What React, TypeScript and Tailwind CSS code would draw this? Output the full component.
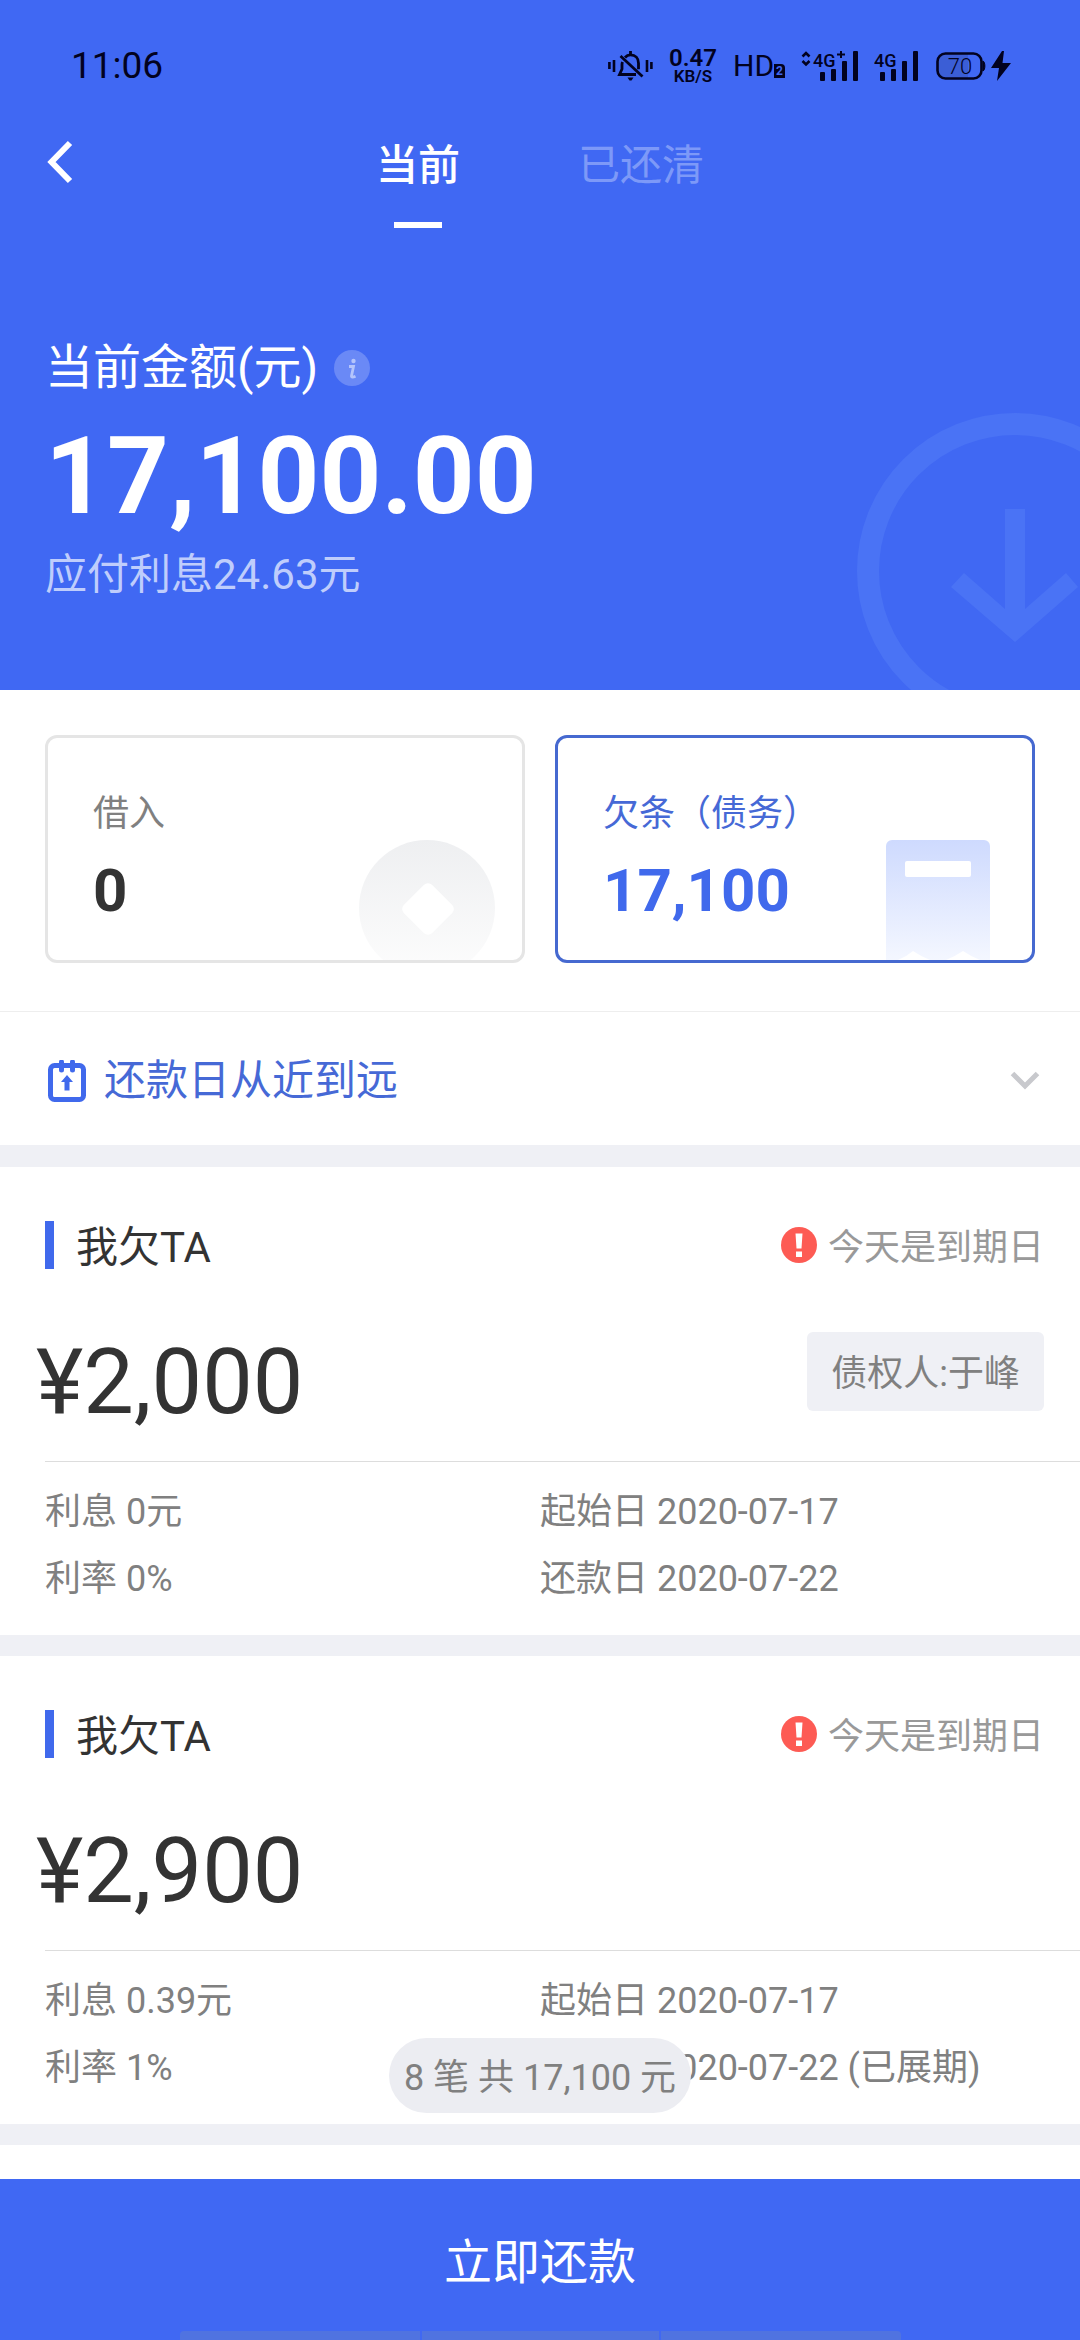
type Loan = {
  id: string;
  amount: string;
  creditor?: string;
  interest: string;
  rate: string;
  start: string;
  due: string;
};

const loans: Loan[] = [
  {
    id: "loan-1",
    amount: "¥2,000",
    creditor: "债权人:于峰",
    interest: "利息 0元",
    rate: "利率 0%",
    start: "起始日 2020-07-17",
    due: "还款日 2020-07-22",
  },
  {
    id: "loan-2",
    amount: "¥2,900",
    interest: "利息 0.39元",
    rate: "利率 1%",
    start: "起始日 2020-07-17",
    due: "还款日 2020-07-22 (已展期)",
  },
];

function MutedBell() {
  return (
    <svg width="45" height="30" viewBox="0 0 45 30" fill="none" stroke="#02021f" strokeWidth="2.8" aria-hidden="true">
      <path d="M1.4 11v7M6 9v12M39 9v12M43.4 11v7" strokeWidth="2.6" />
      <path d="M17 6.500c1.4-1.600 3-2.600 5.500-2.600 5 0 8 3.600 8 8.300v6" />
      <path d="M14.500 11c-.3.800-.5 1.700-.5 2.500V18l-2.500 5.500H28" />
      <path d="M12.500 5l22 20.500" />
      <path d="M22.500 0v4" />
      <path d="M19.500 26.500h6l-2 3h-2z" fill="#02021f" stroke="none" />
    </svg>
  );
}

function SignalBars({ x }: { x: number }) {
  return (
    <g fill="#02021f">
      <rect x={x} y="21" width="5" height="9" rx="1" />
      <rect x={x + 11} y="18" width="5" height="12" rx="1" />
      <rect x={x + 22} y="10" width="5" height="20" rx="1" />
      <rect x={x + 33} y="0" width="5" height="30" rx="1" />
    </g>
  );
}

function StatusBar() {
  return (
    <div className="flex h-[132px] items-center justify-between pl-[71px] pr-[68px] text-[#02021f]">
      <time className="text-[37px] leading-[48px]">11:06</time>
      <div className="flex items-center gap-4">
        <MutedBell />
        <div className="flex w-12 flex-col items-center font-semibold">
          <span className="text-[24px] leading-[20px]">0.47</span>
          <span className="text-[17px] leading-[16px]">KB/S</span>
        </div>
        <div className="flex w-[52px] items-end">
          <span className="text-[30px] leading-[34px]">HD</span>
          <span className="mb-[5px] h-[14px] w-[11px] rounded-tr-sm bg-[#02021f] text-center text-[12px] font-bold leading-[14px] text-[#4068f3]">
            2
          </span>
        </div>
        <svg width="57" height="30" viewBox="0 0 57 30" aria-hidden="true">
          <path d="M1.500 5.500l3.500-3.500 3.500 3.500M1.500 10l3.500 3.500 3.500-3.500" fill="none" stroke="#02021f" strokeWidth="2.600" />
          <text x="12" y="16" fontSize="18" fontWeight="500" fill="#02021f">4G</text>
          <path d="M36 3.500h8M40 0v7" stroke="#02021f" strokeWidth="2" />
          <SignalBars x={19} />
        </svg>
        <svg width="45" height="30" viewBox="0 0 45 30" aria-hidden="true">
          <text x="0" y="16" fontSize="18" fontWeight="500" fill="#02021f">4G</text>
          <SignalBars x={6} />
        </svg>
        <svg width="77" height="30" viewBox="0 0 77 30" aria-hidden="true">
          <path d="M9 3h24v24H9a6 6 0 0 1-6-6V9a6 6 0 0 1 6-6z" fill="#3b5ed6" />
          <rect x="2.500" y="2.500" width="44" height="25" rx="8" fill="none" stroke="#02021f" strokeWidth="2.600" />
          <path d="M48 10c2.500 1 2.500 9 0 10z" fill="#02021f" stroke="#02021f" />
          <text x="25" y="23" fontSize="22" fontWeight="300" textAnchor="middle" fill="#02021f">70</text>
          <path d="M67 0L56 17h8l-2 13 14-18h-8.500L69 0z" fill="#02021f" />
        </svg>
      </div>
    </div>
  );
}

function TopNav() {
  return (
    <nav className="grid grid-cols-[1fr_auto_1fr] items-start">
      <button type="button" aria-label="返回" className="ml-[45px] flex h-[60px] w-8 items-center">
        <svg width="28" height="44" viewBox="0 0 28 44" fill="none" stroke="#fff" strokeWidth="6" aria-hidden="true">
          <path d="M25 3L6.500 22 25 41" />
        </svg>
      </button>
      <div className="flex gap-[118px] text-[42px] leading-[68px]" role="tablist">
        <button type="button" role="tab" aria-selected="true" className="flex flex-col items-center font-medium text-white">
          当前
          <span className="mt-[22px] h-[6px] w-12 bg-white" />
        </button>
        <button type="button" role="tab" aria-selected="false" className="self-start text-[#7d99f8]">
          已还清
        </button>
      </div>
    </nav>
  );
}

function Summary() {
  return (
    <section className="relative px-[45px] pb-[85px] pt-[110px] text-white">
      <svg
        className="pointer-events-none absolute bottom-0 right-0"
        width="224"
        height="278"
        viewBox="0 0 224 278"
        fill="none"
        stroke="#4a73f5"
        aria-hidden="true"
      >
        <circle cx="159" cy="159" r="147" strokeWidth="22" />
        <path fill="#4a73f5" stroke="none" d="M149 97h20v100l41-36 12 14-63 55-64-55 13-14 41 36z" />
      </svg>
      <div className="flex items-center gap-4">
        <h1 className="text-[48px] leading-[60px]">当前金额(元)</h1>
        <button type="button" aria-label="说明">
          <svg width="36" height="36" viewBox="0 0 36 36" aria-hidden="true">
            <circle cx="18" cy="18" r="18" fill="#6a89f6" />
            <circle cx="19.500" cy="11" r="2.200" fill="#b5c5fb" />
            <path d="M15 16.500h4.500l-2 9.500c-.2 1.500 1.500 1.500 4 .3" fill="none" stroke="#b5c5fb" strokeWidth="2.800" />
          </svg>
        </button>
      </div>
      <p className="mt-[18px] text-[108px] font-bold leading-[120px]">17,100.00</p>
      <p className="mt-[9px] text-[42px] leading-[60px] text-[#bfcdfc]">应付利息24.63元</p>
    </section>
  );
}

function CoinArt() {
  return (
    <svg className="absolute bottom-0 right-[27px]" width="136" height="120" viewBox="0 0 136 120" aria-hidden="true">
      <defs>
        <linearGradient id="coin" x1="0" y1="0" x2="0" y2="1">
          <stop offset="0" stopColor="#eeeff1" />
          <stop offset="1" stopColor="#fdfdfd" />
        </linearGradient>
      </defs>
      <circle cx="68" cy="68" r="68" fill="url(#coin)" />
      <rect x="49" y="49" width="40" height="40" rx="6" fill="#fff" transform="rotate(45 69 69)" />
    </svg>
  );
}

function ReceiptArt() {
  return (
    <svg className="absolute bottom-0 right-[42px]" width="104" height="120" viewBox="0 0 104 120" aria-hidden="true">
      <defs>
        <linearGradient id="receipt" x1="0" y1="0" x2="0" y2="1">
          <stop offset="0" stopColor="#cedafe" />
          <stop offset="1" stopColor="#f4f7ff" />
        </linearGradient>
      </defs>
      <path d="M6 0h92a6 6 0 0 1 6 6v114H94q-8-3-17-9-9 6-17 9H44q-8-3-17-9-7 6-15 9H0V6a6 6 0 0 1 6-6z" fill="url(#receipt)" />
      <rect x="19" y="21" width="66" height="16" rx="2" fill="#fff" />
    </svg>
  );
}

function TypeCards() {
  return (
    <section className="grid grid-cols-2 gap-[30px] px-[45px] pb-12 pt-[45px]">
      <button type="button" className="relative overflow-hidden rounded-xl border-[3px] border-[#e5e5e5] pb-[33px] pl-[45px] pt-[49px] text-left">
        <CoinArt />
        <span className="block text-[36px] leading-[54px] text-[#808080]">借入</span>
        <span className="mt-[14px] block text-[60px] font-bold leading-[72px] text-[#333]">0</span>
      </button>
      <button
        type="button"
        aria-pressed="true"
        className="relative overflow-hidden rounded-xl border-[3px] border-[#4669d0] pb-[33px] pl-[45px] pt-[49px] text-left"
      >
        <ReceiptArt />
        <span className="block text-[36px] leading-[54px] text-[#4669d6]">欠条（债务）</span>
        <span className="mt-[14px] block text-[60px] font-bold leading-[72px] text-[#4069ec]">17,100</span>
      </button>
    </section>
  );
}

function SortBar() {
  return (
    <button type="button" className="flex h-[134px] w-full items-center border-t border-[#eee] pl-12 pr-10 pt-1 text-left">
      <svg width="38" height="42" viewBox="0 0 38 42" fill="none" stroke="#4069ec" aria-hidden="true">
        <rect x="2.500" y="5.500" width="33" height="34" rx="4" strokeWidth="5" />
        <path d="M13.500 2v8M24.500 2v8" strokeWidth="5" strokeLinecap="round" />
        <path d="M19 15l6 7h-3.500v8.500h-5V22H13z" fill="#4069ec" stroke="none" />
      </svg>
      <span className="ml-[18px] flex-1 text-[42px] leading-[60px] text-[#4669d6]">还款日从近到远</span>
      <svg width="30" height="20" viewBox="0 0 30 20" fill="none" stroke="#c8c9cd" strokeWidth="5" aria-hidden="true">
        <path d="M2.500 2.500L15 15 27.500 2.500" />
      </svg>
    </button>
  );
}

function LoanItem({ loan }: { loan: Loan }) {
  return (
    <article className="border-b-[21px] border-[#eff0f5] bg-white pt-[54px]">
      <header className="flex items-start justify-between pl-[45px] pr-9">
        <h2 className="flex items-start gap-[22px] text-[42px] leading-[54px] text-[#333]">
          <span className="h-12 w-[9px] bg-[#4069ec]" />
          我欠TA
        </h2>
        <p className="flex items-start gap-[11px] text-[36px] leading-[54px] text-[#999]">
          <svg className="mt-[6px]" width="36" height="36" viewBox="0 0 36 36" aria-hidden="true">
            <circle cx="18" cy="18" r="18" fill="#fd5b54" />
            <path d="M14.500 6.500h7l-1 15h-5zM15 24.500h6v5.500h-6z" fill="#fff" />
          </svg>
          今天是到期日
        </p>
      </header>
      <div className="mt-[57px] flex items-start justify-between px-9">
        <p className="text-[90px] leading-[102px] text-[#333]">{loan.amount}</p>
        {loan.creditor && (
          <p className="rounded-md bg-[#eff0f5] px-6 pb-[9px] pt-[15px] text-[36px] leading-[55px] text-[#808080]">
            {loan.creditor}
          </p>
        )}
      </div>
      <div className="ml-[45px] mt-[27px] grid grid-cols-[495px_1fr] border-t border-[#ddd] pb-[22px] pt-[17px] text-[36px] leading-[67px] text-[#808080]">
        <p>{loan.interest}</p>
        <p>{loan.start}</p>
        <p>{loan.rate}</p>
        <p>{loan.due}</p>
      </div>
    </article>
  );
}

function PayBar() {
  return (
    <footer className="sticky bottom-0 bg-[#4068f3]">
      <div className="pointer-events-none absolute inset-x-0 bottom-full mb-[66px] flex justify-center">
        <p className="rounded-full bg-[#ecedf2] px-[15px] pb-[7px] pt-[13px] text-[36px] leading-[55px] text-[#808080]">
          8 笔 共 17,100 元
        </p>
      </div>
      <button type="button" className="block h-[161px] w-full pt-[6px] text-[48px] leading-[60px] text-white">
        立即还款
      </button>
      <div className="pointer-events-none absolute inset-x-0 bottom-0 flex justify-center gap-[2px]">
        <span className="h-[9px] w-60 rounded-tl bg-[#5073e0]" />
        <span className="h-[9px] w-[237px] bg-[#5073e0]" />
        <span className="h-[9px] w-60 rounded-tr bg-[#5073e0]" />
      </div>
    </footer>
  );
}

export default function App() {
  return (
    <div className='flex min-h-screen flex-col bg-white font-[Roboto,"Noto_Sans_CJK_SC",sans-serif]'>
      <div className="bg-[#4068f3]">
        <StatusBar />
        <TopNav />
        <Summary />
      </div>
      <main className="flex-1">
        <TypeCards />
        <div className="border-b-[22px] border-[#eff0f5]">
          <SortBar />
        </div>
        {loans.map((loan) => (
          <LoanItem key={loan.id} loan={loan} />
        ))}
      </main>
      <PayBar />
    </div>
  );
}
